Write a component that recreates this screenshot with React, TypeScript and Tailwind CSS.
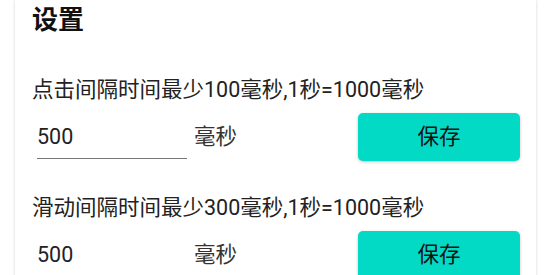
const font = { fontFamily: 'Roboto, "Noto Sans CJK SC", sans-serif' };

function Row({ label, value }: { label: string; value: string }) {
  return (
    <div>
      <p className="h-[30px] leading-[30px] text-[21.5px] text-[#222]">{label}</p>
      <div className="mt-[8px] flex h-[48px] items-center">
        <div className="relative ml-[5px] h-full w-[150px]">
          <span className="absolute left-0 top-[9px] text-[21.5px] leading-[30px] text-[#222]">{value}</span>
          <div className="absolute bottom-[2px] left-0 h-px w-full bg-[#777]" />
        </div>
        <span className="ml-[7px] text-[21.5px] leading-[30px] text-[#333]">毫秒</span>
        <button className="ml-auto mr-[16px] h-[48px] w-[162px] rounded-[5px] bg-[#03dac5] text-[21.5px] text-[#111] shadow-[0_1px_3px_rgba(0,0,0,0.25)]">
          保存
        </button>
      </div>
    </div>
  );
}

export default function App() {
  return (
    <div className="h-[275px] w-[550px] overflow-hidden bg-white" style={font}>
      <div className="ml-[15px] h-[300px] w-[521px] bg-white pl-[17px] shadow-[0_0_3px_rgba(0,0,0,0.18)]">
        <h1 className="h-[40px] text-[26px] font-bold leading-[40px] text-[#111]">设置</h1>
        <div className="mt-[35px] flex flex-col gap-[32px]">
          <Row label="点击间隔时间最少100毫秒,1秒=1000毫秒" value="500" />
          <Row label="滑动间隔时间最少300毫秒,1秒=1000毫秒" value="500" />
        </div>
      </div>
    </div>
  );
}
